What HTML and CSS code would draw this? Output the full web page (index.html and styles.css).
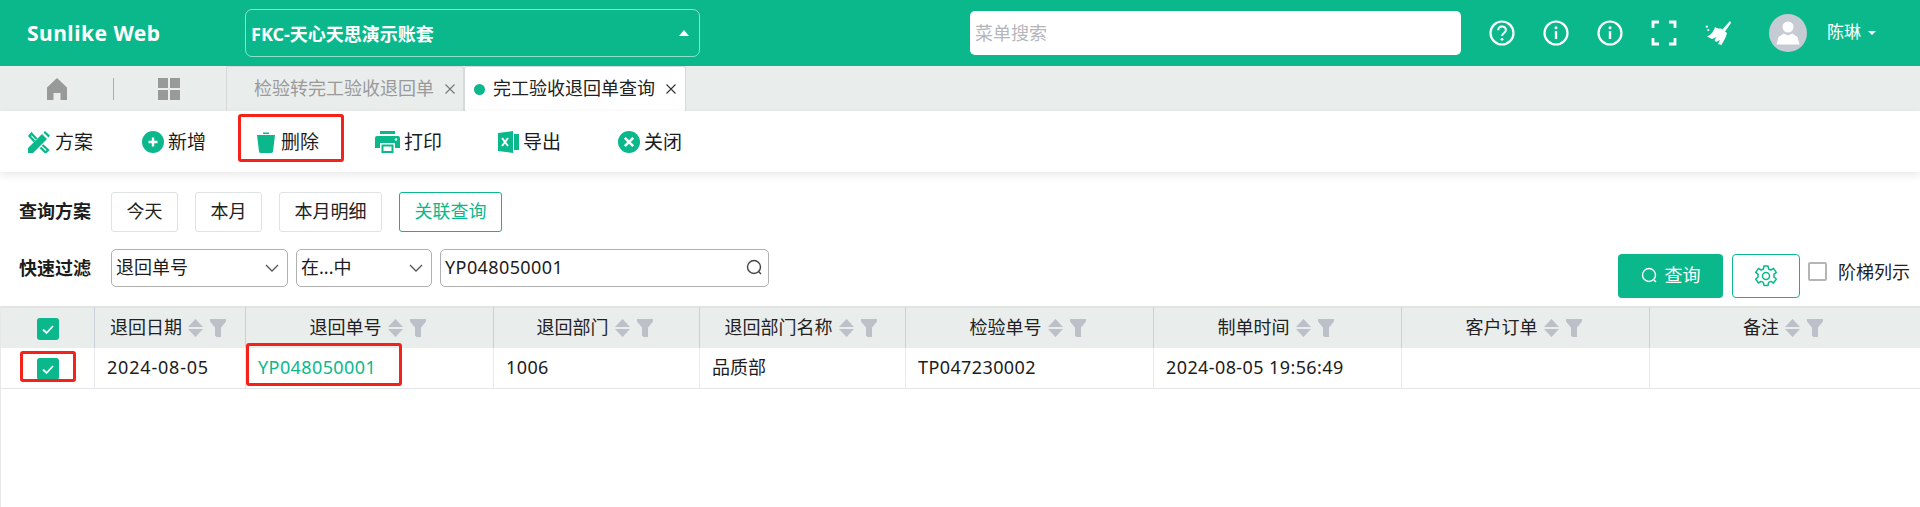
FILE: index.html
```html
<!DOCTYPE html>
<html lang="zh">
<head>
<meta charset="utf-8">
<title>完工验收退回单查询</title>
<link rel="stylesheet" href="styles.css">
</head>
<body>
<svg class="defs" aria-hidden="true">
  <symbol id="sort" viewBox="0 0 15 20"><path d="M7.500 1 15 9H0zM0 11h15l-7.500 8z"/></symbol>
  <symbol id="funnel" viewBox="0 0 16 18"><path d="M0 0h16v2.500l-5 6V18H6.500l-1.500-1.500V8.500l-5-6z"/></symbol>
  <symbol id="check" viewBox="0 0 22 22"><path d="M6 11.500l3.500 3.500L16 8" fill="none" stroke="#fff" stroke-width="1.800"/></symbol>
  <symbol id="lens" viewBox="0 0 18 18"><circle cx="8" cy="8" r="6.500" fill="none" stroke="currentColor" stroke-width="1.400"/><path d="M12.500 12.500 15 15" stroke="currentColor" stroke-width="1.400"/></symbol>
  <symbol id="chev" viewBox="0 0 14 8"><path d="M1 1l6 6 6-6" fill="none" stroke="#555" stroke-width="1.300"/></symbol>
  <symbol id="info" viewBox="0 0 26 26"><circle cx="13" cy="13" r="11.500" fill="none" stroke="#fff" stroke-width="2.200"/><path d="M13 11v8" stroke="#fff" stroke-width="2.400"/><circle cx="13" cy="7.800" r="1.500" fill="#fff"/></symbol>
  <symbol id="tabx" viewBox="0 0 12 12"><path d="M1.500 1.500l9 9M10.500 1.500l-9 9" fill="none" stroke="currentColor" stroke-width="1.100"/></symbol>
</svg>

<header class="topbar">
  <div class="logo">Sunlike Web</div>
  <div class="account"><span>FKC-天心天思演示账套</span><i class="caret-up"></i></div>
  <div class="menu-search">菜单搜索</div>
  <div class="top-icons">
    <svg class="ticon" viewBox="0 0 26 26"><circle cx="13" cy="13" r="11.500" fill="none" stroke="#fff" stroke-width="2.200"/><path d="M9.300 10.200c0-5 7.600-4.800 7.600-.2 0 2.900-3.900 3-3.900 6" fill="none" stroke="#fff" stroke-width="2"/><circle cx="13" cy="19.300" r="1.400" fill="#fff"/></svg>
    <svg class="ticon"><use href="#info"/></svg>
    <svg class="ticon"><use href="#info"/></svg>
    <svg class="ticon" viewBox="0 0 26 26"><path d="M2 8V2h6M18 2h6v6M24 18v6h-6M8 24H2v-6" fill="none" stroke="#fff" stroke-width="2.800"/></svg>
    <svg class="ticon" viewBox="0 0 26 26"><path d="M25 1l-8.500 9.500 2.500 2.500 7-10z" fill="#fff"/><path d="M10 7c2 2 5 1 7 2l5 4c-1 5-4 9-5.500 12L13 24l2-4-4 2-1.500-2 2-3-4.500 2-5-2.500C6 15 9 11 10 7z" fill="#fff"/><circle cx="1.800" cy="6.700" r="1.100" fill="#fff"/><circle cx="3.300" cy="10" r="1.100" fill="#fff"/></svg>
  </div>
  <svg class="avatar" viewBox="0 0 38 38"><circle cx="19" cy="19" r="19" fill="#c6cad2"/><circle cx="19" cy="13" r="5.500" fill="#fff"/><path d="M14.500 19.500 19 21.500l4.500-2 5 3.500 2 7.500H7.500l2-7.500z" fill="#fff"/></svg>
  <div class="user">陈琳</div><i class="caret-down"></i>
</header>

<nav class="tabbar">
  <div class="tab-tools">
    <svg class="home" viewBox="0 0 24 24"><path d="M12 1 22 10.500V23h-6.500v-7h-7v7H2V10.500z"/></svg>
    <i class="tool-sep"></i>
    <svg class="grid" viewBox="0 0 22 22"><path d="M0 0h10v10H0zM12 0h10v10H12zM0 12h10v10H0zM12 12h10v10H12z"/></svg>
  </div>
  <div class="tab"><span class="tab-label">检验转完工验收退回单</span><svg class="tab-x"><use href="#tabx"/></svg></div>
  <div class="tab active"><i class="tab-dot"></i><span class="tab-label">完工验收退回单查询</span><svg class="tab-x"><use href="#tabx"/></svg></div>
</nav>

<div class="toolbar">
  <div class="tool">
    <svg class="tool-icon" viewBox="0 0 23 22"><path d="M0 17 14 3l5 5L5 22H0zM15.500 1.500 17 0l5 4.500-1.500 2z" fill="#0ab88c"/><path d="M8.500 8 3.500 2.500 1.500 5l5 5.500M14.500 14l5.500 5-2.500 2.500-5-5" fill="none" stroke="#0ab88c" stroke-width="2.300"/></svg>
    <span>方案</span>
  </div>
  <div class="tool">
    <svg class="tool-icon" viewBox="0 0 22 22"><circle cx="11" cy="11" r="11" fill="#0ab88c"/><path d="M11 6.500v9M6.500 11h9" stroke="#fff" stroke-width="2.400"/></svg>
    <span>新增</span>
  </div>
  <div class="tool">
    <svg class="tool-icon" viewBox="0 0 18 22"><path d="M6 1.500h6V3H6zM0 4h18l-2 16.500q-.2 1.500-2 1.500H4q-1.800 0-2-1.500z" fill="#0ab88c"/></svg>
    <span>删除</span>
    <i class="mark mark-tool"></i>
  </div>
  <div class="tool">
    <svg class="tool-icon" viewBox="0 0 25 22"><path d="M5 0h15v3H5zM2 5h21q2 0 2 2v10h-5v-5H5v5H0V7q0-2 2-2z" fill="#0ab88c"/><path d="M6.500 13.500h12V22h-12z" fill="#0ab88c"/><path d="M8.500 15.500h8v4.500h-8z" fill="#fff"/><circle cx="21" cy="8.500" r="1.200" fill="#fff"/></svg>
    <span>打印</span>
  </div>
  <div class="tool">
    <svg class="tool-icon" viewBox="0 0 21 22"><path d="M0 2 15 0v22L0 20zM16 3h5v16h-5z" fill="#0ab88c"/><path d="M4 7l6 8M10 7l-6 8" stroke="#fff" stroke-width="2"/></svg>
    <span>导出</span>
  </div>
  <div class="tool">
    <svg class="tool-icon" viewBox="0 0 22 22"><circle cx="11" cy="11" r="11" fill="#0ab88c"/><path d="M6.800 6.800l8.400 8.400M15.200 6.800l-8.400 8.400" stroke="#fff" stroke-width="2.600"/></svg>
    <span>关闭</span>
  </div>
</div>

<section class="query">
  <div class="query-row">
    <label class="q-label">查询方案</label>
    <button class="chip">今天</button>
    <button class="chip">本月</button>
    <button class="chip">本月明细</button>
    <button class="chip chip-on">关联查询</button>
  </div>
  <div class="filter-row">
    <label class="q-label">快速过滤</label>
    <div class="field f-col"><span>退回单号</span><svg class="chev"><use href="#chev"/></svg></div>
    <div class="field f-op"><span>在...中</span><svg class="chev"><use href="#chev"/></svg></div>
    <div class="field f-val"><span class="num">YP048050001</span><svg class="lens"><use href="#lens"/></svg></div>
    <div class="actions">
      <button class="search-btn"><svg class="lens"><use href="#lens"/></svg>查询</button>
      <button class="gear-btn"><svg class="gear" viewBox="0 0 24 24"><path d="M10 2h4l.6 3 2.300 1 2.600-1.600 2.800 4-2.400 2 .1 1.300-.1 1.300 2.400 2-2.800 4-2.600-1.600-2.300 1-.6 3h-4l-.6-3-2.300-1-2.600 1.600-2.800-4 2.400-2-.1-1.300.1-1.300-2.400-2 2.800-4L7.100 6l2.300-1z" fill="none" stroke="#0ab88c" stroke-width="1.500" stroke-linejoin="round"/><circle cx="12" cy="12" r="3.500" fill="none" stroke="#0ab88c" stroke-width="1.500"/></svg></button>
      <i class="box"></i>
      <span class="box-label">阶梯列示</span>
    </div>
  </div>
</section>

<table class="grid-table">
  <colgroup>
    <col class="c-check"><col class="c-date"><col class="c-no"><col class="c-dept"><col class="c-name"><col class="c-insp"><col class="c-time"><col class="c-order"><col>
  </colgroup>
  <thead>
    <tr>
      <th><span class="cb"><svg><use href="#check"/></svg></span></th>
      <th><div class="th-in">退回日期<svg class="sort"><use href="#sort"/></svg><svg class="funnel"><use href="#funnel"/></svg></div></th>
      <th><div class="th-in">退回单号<svg class="sort"><use href="#sort"/></svg><svg class="funnel"><use href="#funnel"/></svg></div></th>
      <th><div class="th-in">退回部门<svg class="sort"><use href="#sort"/></svg><svg class="funnel"><use href="#funnel"/></svg></div></th>
      <th><div class="th-in">退回部门名称<svg class="sort"><use href="#sort"/></svg><svg class="funnel"><use href="#funnel"/></svg></div></th>
      <th><div class="th-in">检验单号<svg class="sort"><use href="#sort"/></svg><svg class="funnel"><use href="#funnel"/></svg></div></th>
      <th><div class="th-in">制单时间<svg class="sort"><use href="#sort"/></svg><svg class="funnel"><use href="#funnel"/></svg></div></th>
      <th><div class="th-in">客户订单<svg class="sort"><use href="#sort"/></svg><svg class="funnel"><use href="#funnel"/></svg></div></th>
      <th><div class="th-in">备注<svg class="sort"><use href="#sort"/></svg><svg class="funnel"><use href="#funnel"/></svg></div></th>
    </tr>
  </thead>
  <tbody>
    <tr>
      <td class="td-check"><span class="cb"><svg><use href="#check"/></svg></span><i class="mark mark-check"></i></td>
      <td class="date">2024-08-05</td>
      <td class="td-link"><span class="num link">YP048050001</span><i class="mark mark-no"></i></td>
      <td class="num">1006</td>
      <td>品质部</td>
      <td class="num">TP047230002</td>
      <td class="num">2024-08-05 19:56:49</td>
      <td></td>
      <td></td>
    </tr>
  </tbody>
</table>
<div class="grid-empty"></div>
</body>
</html>
```

FILE: styles.css
```css
* { box-sizing: border-box; }
html, body { height: 100%; }
body {
  margin: 0;
  display: flex;
  flex-direction: column;
  background: #fff;
  color: #1c1c1c;
  font: 18px/1.2 "Noto Sans", "Noto Sans CJK SC", sans-serif;
  overflow: hidden;
}
.defs { position: absolute; width: 0; height: 0; }
i { display: block; font-style: normal; }
button { font: inherit; cursor: pointer; }

/* top bar */
.topbar {
  flex: none;
  height: 66px;
  display: flex;
  align-items: center;
  background: #0ab88c;
  color: #fff;
}
.logo { width: 245px; padding: 2px 0 0 27px; font-size: 21px; font-weight: 700; letter-spacing: .5px; }
.account {
  width: 455px;
  height: 48px;
  padding: 3px 10px 0 5px;
  display: flex;
  align-items: center;
  justify-content: space-between;
  border: 1px solid rgba(255, 255, 255, .55);
  border-radius: 7px;
  font-weight: 700;
  font-size: 18px;
}
.caret-up { width: 0; height: 0; margin-top: -3px; border: 5.500px solid transparent; border-top: 0; border-bottom: 6px solid #fff; }
.menu-search {
  width: 491px;
  height: 44px;
  margin-left: 270px;
  padding: 2px 0 0 5px;
  display: flex;
  align-items: center;
  background: #fff;
  border-radius: 5px;
  color: #b4b6bc;
}
.top-icons { display: flex; gap: 28px; margin-left: 28px; }
.ticon { width: 26px; height: 26px; display: block; }
.avatar { width: 38px; height: 38px; margin-left: 38px; }
.user { margin: -2px 0 0 20px; font-size: 17px; }
.caret-down { width: 0; height: 0; margin-left: 7px; border: 4px solid transparent; border-bottom: 0; border-top: 4.500px solid #fff; }

/* tabs */
.tabbar { flex: none; height: 45px; display: flex; background: #e9edec; }
.tab-tools { width: 226px; padding-left: 45px; display: flex; align-items: center; }
.home { width: 24px; height: 24px; fill: #999; }
.tool-sep { width: 1px; height: 22px; margin: 0 44px; background: #a8acac; }
.grid { width: 22px; height: 22px; fill: #999; }
.tab {
  width: 238px;
  display: flex;
  align-items: center;
  padding-left: 27px;
  border: 1px solid #d7dada;
  border-bottom: 0;
  border-radius: 3px 3px 0 0;
  color: #9a9a9a;
}
.tab-x { width: 12px; height: 12px; margin-left: 10px; color: #777; flex: none; }
.tab.active { width: 222px; padding-left: 9px; background: #fff; color: #222; }
.tab.active .tab-label { margin-left: 8px; }
.tab.active .tab-x { color: #333; }
.tab-dot { width: 11px; height: 11px; border-radius: 50%; background: #0ab88c; }

/* toolbar */
.toolbar {
  flex: none;
  position: relative;
  height: 61px;
  padding: 2px 0 0 28px;
  display: grid;
  grid-template-columns: 114px 115px 118px 123px 120px auto;
  align-items: center;
  background: #fff;
  box-shadow: 0 3px 8px rgba(0, 0, 0, .09);
  font-size: 19px;
}
.tool { position: relative; display: flex; align-items: center; gap: 4px; }
.tool-icon { height: 22px; width: auto; flex: none; }
.tool:nth-child(1) .tool-icon { width: 23px; }
.tool:nth-child(2) .tool-icon { width: 22px; }
.tool:nth-child(3) .tool-icon { width: 18px; margin-right: 2px; }
.tool:nth-child(4) .tool-icon { width: 25px; }
.tool:nth-child(5) .tool-icon { width: 21px; }
.tool:nth-child(6) .tool-icon { width: 22px; }

/* red annotation boxes */
.mark { position: absolute; border: 3px solid #f5221a; border-radius: 3px; pointer-events: none; }
.mark-tool { left: -19px; top: -17px; width: 106px; height: 48px; }
.mark-check { left: 19px; top: 3px; width: 56px; height: 31px; }
.mark-no { left: 0; top: -5px; width: 156px; height: 43px; }

/* query area */
.query { flex: none; padding: 20px 0 8px 19px; height: 134px; }
.query-row { display: flex; align-items: center; height: 40px; }
.q-label { width: 92px; font-weight: 700; }
.chip {
  height: 40px;
  margin-right: 17px;
  padding: 0 14.500px;
  background: #fff;
  border: 1px solid #dfe2e2;
  border-radius: 3px;
  color: #222;
}
.chip-on { border-color: #0ab88c; color: #0ab88c; }
.filter-row { display: flex; align-items: flex-start; margin-top: 17px; }
.filter-row .q-label { line-height: 38px; }
.field {
  height: 38px;
  margin-right: 8px;
  padding: 0 8px 0 4px;
  display: flex;
  align-items: center;
  justify-content: space-between;
  border: 1.500px solid #b0b0b0;
  border-radius: 5px;
}
.f-col { width: 177px; }
.f-op { width: 136px; }
.f-val { width: 329px; margin-right: 0; padding-right: 4px; }
.chev { width: 14px; height: 8px; }
.lens { width: 18px; height: 18px; color: #444; }
.num { letter-spacing: .4px; }
.date { letter-spacing: .8px; }
.actions { margin-left: auto; display: flex; align-items: flex-start; margin-top: 5px; }
.search-btn {
  width: 105px;
  height: 44px;
  display: flex;
  align-items: center;
  justify-content: center;
  gap: 6px;
  background: #0ab88c;
  border: 0;
  border-radius: 4px;
  color: #fff;
}
.search-btn .lens { color: #fff; }
.gear-btn {
  width: 68px;
  height: 44px;
  margin-left: 9px;
  display: flex;
  align-items: center;
  justify-content: center;
  background: #fff;
  border: 1px solid #0ab88c;
  border-radius: 4px;
}
.gear { width: 24px; height: 24px; }
.box { width: 19px; height: 19px; margin: 8px 11px 0 8px; border: 2px solid #b5b5b5; border-radius: 2px; }
.box-label { margin: 6px 10px 0 0; line-height: 24px; color: #222; }

/* table */
.grid-table { flex: none; width: 100%; table-layout: fixed; border-collapse: separate; border-spacing: 0; border-left: 1px solid #e6e8ea; }
.c-check { width: 94px; }
.c-date { width: 151px; }
.c-no { width: 248px; }
.c-dept { width: 206px; }
.c-name { width: 206px; }
.c-insp { width: 248px; }
.c-time { width: 248px; }
.c-order { width: 248px; }
th {
  height: 42px;
  padding: 0;
  font-weight: 400;
  background: #e9edec;
  border-top: 2px solid #e2e4e4;
  border-right: 1px solid #c9d0dc;
}
th:last-child, td:last-child { border-right: 0; }
.th-in { display: flex; align-items: center; justify-content: center; padding-right: 4px; color: #222; }
.sort { width: 15px; height: 20px; margin-left: 6px; fill: #bcc0c9; }
.funnel { width: 16px; height: 18px; margin-left: 7px; fill: #bcc0c9; }
td {
  position: relative;
  height: 41px;
  padding: 0 12px;
  border-right: 1px solid #e8eaee;
  border-bottom: 1px solid #e3e5e8;
}
td.td-check, th:first-child { text-align: center; padding: 0; }
.td-link { padding-left: 12px; }
.link { color: #0ab88c; }
.cb { display: inline-block; width: 22px; height: 22px; background: #0ab88c; border-radius: 3px; vertical-align: middle; }
.cb svg { display: block; width: 22px; height: 22px; }
.grid-empty { flex: 1; border-left: 1px solid #e6e8ea; }
```
